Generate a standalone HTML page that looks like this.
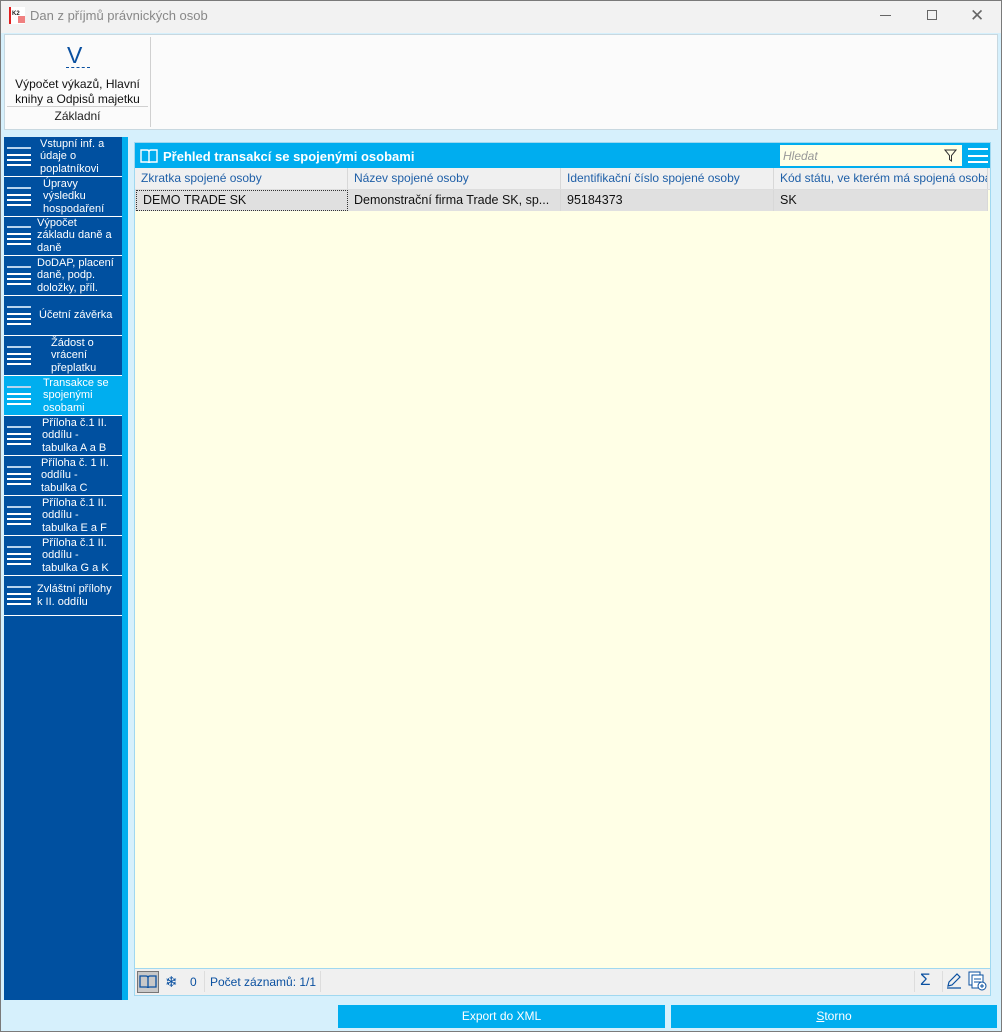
<!DOCTYPE html>
<html><head><meta charset="utf-8"><style>
*{margin:0;padding:0;box-sizing:border-box}
body{width:1002px;height:1032px;position:relative;overflow:hidden;background:#d6f0fc;font-family:"Liberation Sans",sans-serif;font-size:12px}
.a{position:absolute}
.win{left:0;top:0;width:1002px;height:1032px;border:1px solid #7a7a7a}
.side{left:4px;top:137px;width:118px;height:863px;background:#0050a0}
.it{position:absolute;left:0;width:118px;height:40px;border-bottom:1px solid #fff;color:#fff;font-size:11px;line-height:12.5px;display:flex;align-items:center}
.it .hb{position:absolute;left:3px;top:10px;width:24px;height:20px}
.it .hb i{position:absolute;left:0;width:24px;height:2px;background:#fff}
.it .hb i:nth-child(1){top:0;background:#b8d4ee}
.it .hb i:nth-child(2){top:7px}
.it .hb i:nth-child(3){top:12px}
.it .hb i:nth-child(4){top:17px}
.it span{display:block}
.col{position:absolute;top:0;height:21px;line-height:21px;padding-left:6px;border-right:1px solid #d8d8d8;overflow:hidden;white-space:nowrap}
</style></head><body>
<div class="a win"></div>
<div class="a" style="left:1px;top:1px;width:1000px;height:32px;background:#f2f2f2"></div>
<div class="a" style="left:9px;top:7px;width:16px;height:17px;background:#fff;border-left:2px solid #e02020"></div>
<div class="a" style="left:12px;top:11px;font-size:6px;font-weight:bold;color:#222">K2</div>
<div class="a" style="left:18px;top:16px;width:7px;height:7px;background:#f08080"></div>
<div class="a" style="left:30px;top:8px;font-size:13px;color:#888">Dan z příjmů právnických osob</div>
<div class="a" style="left:880px;top:15px;width:11px;height:1px;background:#666"></div>
<div class="a" style="left:927px;top:10px;width:10px;height:10px;border:1px solid #666"></div>
<div class="a" style="left:970px;top:6px;font-size:17px;color:#666">✕</div>
<!-- ribbon -->
<div class="a" style="left:4px;top:34px;width:994px;height:96px;background:#fbfbfb;border:1px solid #c8d8e0"></div>
<div class="a" style="left:150px;top:37px;width:1px;height:90px;background:#d0d0d0"></div>
<div class="a" style="left:7px;top:106px;width:141px;height:1px;background:#d0d0d0"></div>
<div class="a" style="left:67px;top:42px;font-size:23px;color:#0a50a0">V</div>
<div class="a" style="left:66px;top:67px;width:24px;border-top:1px dashed #0a50a0"></div>
<div class="a" style="left:7px;top:77px;width:141px;text-align:center;font-size:12px;line-height:15px;color:#111">Výpočet výkazů, Hlavní knihy a Odpisů majetku</div>
<div class="a" style="left:7px;top:109px;width:141px;text-align:center;color:#222">Základní</div>
<!-- sidebar -->
<div class="a side">
<div class="it" style="top:0"><div class="hb"><i></i><i></i><i></i><i></i></div><span style="margin-left:36px">Vstupní inf. a<br>údaje o<br>poplatníkovi</span></div>
<div class="it" style="top:40px"><div class="hb"><i></i><i></i><i></i><i></i></div><span style="margin-left:39px">Úpravy<br>výsledku<br>hospodaření</span></div>
<div class="it" style="top:79px"><div class="hb"><i></i><i></i><i></i><i></i></div><span style="margin-left:33px">Výpočet<br>základu daně a<br>daně</span></div>
<div class="it" style="top:119px"><div class="hb"><i></i><i></i><i></i><i></i></div><span style="margin-left:33px">DoDAP, placení<br>daně, podp.<br>doložky, příl.</span></div>
<div class="it" style="top:159px"><div class="hb"><i></i><i></i><i></i><i></i></div><span style="margin-left:35px">Účetní závěrka</span></div>
<div class="it" style="top:199px"><div class="hb"><i></i><i></i><i></i><i></i></div><span style="margin-left:47px">Žádost o<br>vrácení<br>přeplatku</span></div>
<div class="it" style="top:239px;background:#00aeef"><div class="hb"><i></i><i></i><i></i><i></i></div><span style="margin-left:39px">Transakce se<br>spojenými<br>osobami</span></div>
<div class="it" style="top:279px"><div class="hb"><i></i><i></i><i></i><i></i></div><span style="margin-left:38px">Příloha č.1 II.<br>oddílu -<br>tabulka A a B</span></div>
<div class="it" style="top:319px"><div class="hb"><i></i><i></i><i></i><i></i></div><span style="margin-left:37px">Příloha č. 1 II.<br>oddílu -<br>tabulka C</span></div>
<div class="it" style="top:359px"><div class="hb"><i></i><i></i><i></i><i></i></div><span style="margin-left:38px">Příloha č.1 II.<br>oddílu -<br>tabulka E a F</span></div>
<div class="it" style="top:399px"><div class="hb"><i></i><i></i><i></i><i></i></div><span style="margin-left:38px">Příloha č.1 II.<br>oddílu -<br>tabulka G a K</span></div>
<div class="it" style="top:439px"><div class="hb"><i></i><i></i><i></i><i></i></div><span style="margin-left:33px">Zvláštní přílohy<br>k II. oddílu</span></div>
</div>
<div class="a" style="left:122px;top:137px;width:6px;height:863px;background:#00aeef"></div>
<!-- panel -->
<div class="a" style="left:134px;top:142px;width:857px;height:854px;border:1px solid #a0d8f0;background:#ffffe6"></div>
<div class="a" style="left:135px;top:143px;width:855px;height:25px;background:#00adef"></div>
<svg class="a" style="left:139px;top:148px" width="20" height="17" viewBox="0 0 20 17"><path d="M2 2h6q2 0 2 2v11q0-1-2-1H2z M18 2h-6q-2 0-2 2v11q0-1 2-1h6z" fill="none" stroke="#fff" stroke-width="1.4"/></svg>
<div class="a" style="left:163px;top:149px;color:#fff;font-weight:bold;font-size:13px">Přehled transakcí se spojenými osobami</div>
<div class="a" style="left:780px;top:145px;width:182px;height:21px;background:#ffffe6"></div>
<div class="a" style="left:783px;top:149px;color:#999;font-style:italic">Hledat</div>
<svg class="a" style="left:944px;top:149px" width="13" height="13" viewBox="0 0 13 13"><path d="M1 1h11L7.5 6.5V12L5.5 10.5V6.5z" fill="none" stroke="#333" stroke-width="1"/></svg>
<div class="a" style="left:968px;top:148px;width:20px;height:15px;border-top:2px solid #fff;border-bottom:2px solid #fff"><div style="margin-top:4.5px;height:2px;background:#fff"></div></div>
<div class="a" style="left:135px;top:168px;width:855px;height:22px;background:#f0f0f0;color:#2060a8;border-bottom:1px solid #ddd">
<div class="col" style="left:0;width:213px">Zkratka spojené osoby</div>
<div class="col" style="left:213px;width:213px">Název spojené osoby</div>
<div class="col" style="left:426px;width:213px">Identifikační číslo spojené osoby</div>
<div class="col" style="left:639px;width:214px">Kód státu, ve kterém má spojená osoba</div>
</div>
<div class="a" style="left:135px;top:190px;width:853px;height:21px;background:#e0e0e0;color:#111;font-size:12.5px">
<div class="col" style="left:1px;width:212px;border:1px dotted #333;height:21px;line-height:19px">DEMO TRADE SK</div>
<div class="col" style="left:213px;width:213px">Demonstrační firma Trade SK, sp...</div>
<div class="col" style="left:426px;width:213px">95184373</div>
<div class="col" style="left:639px;width:214px">SK</div>
</div>
<!-- footer -->
<div class="a" style="left:135px;top:968px;width:855px;height:27px;background:#f0f0f0;border-top:1px solid #a0d8f0"></div>
<div class="a" style="left:137px;top:971px;width:22px;height:22px;background:#c8c8c8;border:1px solid #777"></div>
<svg class="a" style="left:139px;top:974px" width="18" height="16" viewBox="0 0 18 16"><path d="M1 2h6q2 0 2 2v10q0-1-2-1H1z M17 2h-6q-2 0-2 2v10q0-1 2-1h6z" fill="none" stroke="#0a50a0" stroke-width="1.3"/></svg>
<div class="a" style="left:165px;top:973px;color:#0a50a0;font-size:15px">❄</div>
<div class="a" style="left:190px;top:975px;color:#0a50a0">0</div>
<div class="a" style="left:204px;top:971px;width:1px;height:21px;background:#ddd"></div>
<div class="a" style="left:210px;top:975px;color:#0a50a0">Počet záznamů: 1/1</div>
<div class="a" style="left:320px;top:971px;width:1px;height:21px;background:#ddd"></div>
<div class="a" style="left:914px;top:971px;width:1px;height:21px;background:#ddd"></div>
<div class="a" style="left:920px;top:970px;color:#0a50a0;font-size:17px">Σ</div>
<div class="a" style="left:942px;top:971px;width:1px;height:21px;background:#ddd"></div>
<svg class="a" style="left:945px;top:972px" width="18" height="18" viewBox="0 0 18 18"><path d="M3 14l1-4 8-8 3 3-8 8z M2 16h14" fill="none" stroke="#0a50a0" stroke-width="1.2"/></svg>
<svg class="a" style="left:967px;top:971px" width="20" height="20" viewBox="0 0 20 20"><rect x="2" y="1" width="11" height="13" fill="#fff" stroke="#0a50a0"/><rect x="5" y="4" width="11" height="13" fill="#fff" stroke="#0a50a0"/><path d="M7 8h7M7 11h7" stroke="#0a50a0"/><circle cx="15" cy="15" r="4" fill="#fff" stroke="#0a50a0"/><path d="M15 13v4M13 15h4" stroke="#0a50a0"/></svg>
<!-- buttons -->
<div class="a" style="left:338px;top:1005px;width:327px;height:23px;background:#00aeef;color:#fff;text-align:center;line-height:23px">Export do XML</div>
<div class="a" style="left:671px;top:1005px;width:326px;height:23px;background:#00aeef;color:#fff;text-align:center;line-height:23px"><u>S</u>torno</div>
</body></html>
